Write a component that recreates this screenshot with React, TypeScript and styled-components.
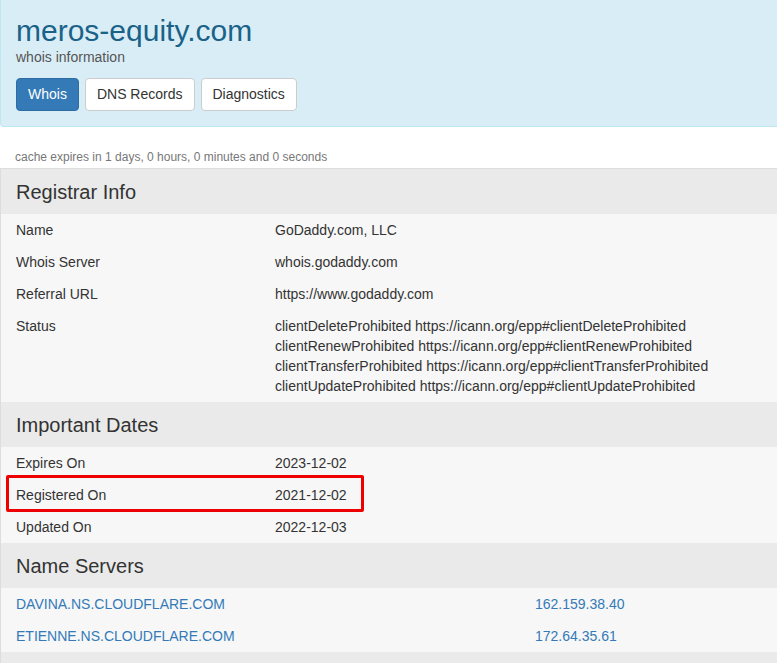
import React from "react";
import styled, { createGlobalStyle } from "styled-components";

const Global = createGlobalStyle`
  html, body { margin: 0; padding: 0; background: #fff; }
  body {
    font-family: "Liberation Sans", Arial, Helvetica, sans-serif;
    font-size: 14px;
    line-height: 20px;
    color: #333;
    overflow: hidden;
  }
  * { box-sizing: border-box; }
`;

const Page = styled.div`
  width: 100%;
`;

const Header = styled.header`
  background: #d9edf7;
  border: 1px solid #bce8f1;
  border-top: none;
  border-right: none;
  border-bottom-left-radius: 4px;
  padding: 14px 15px 15px 15px;
  height: 127px;
`;

const Title = styled.h1`
  margin: 0;
  font-size: 30px;
  line-height: 34px;
  font-weight: 400;
  color: #1a6287;
`;

const Subtitle = styled.div`
  font-size: 14px;
  line-height: 18px;
  color: #555;
`;

const Tabs = styled.nav`
  display: flex;
  gap: 6px;
  margin-top: 12px;
`;

const TabButton = styled.button<{ $active?: boolean }>`
  font-family: inherit;
  font-size: 14px;
  line-height: 19px;
  padding: 6px 11px;
  border-radius: 4px;
  cursor: pointer;
  border: 1px solid ${(p) => (p.$active ? "#2e6da4" : "#ccc")};
  background: ${(p) => (p.$active ? "#337ab7" : "#fff")};
  color: ${(p) => (p.$active ? "#fff" : "#333")};
`;

const Cache = styled.div`
  font-size: 12px;
  line-height: 16px;
  color: #777;
  padding: 22px 15px 3px 15px;
`;

const Table = styled.div`
  position: relative;
  border-top: 1px solid #ddd;
  border-left: 1px solid #ddd;
`;

const SectionHead = styled.div`
  background: #e9eae9;
  font-size: 20px;
  line-height: 25px;
  min-height: 45px;
  padding: 11px 15px 9px 15px;
  color: #333;
`;

const Row = styled.div<{ $cols: string }>`
  display: grid;
  grid-template-columns: ${(p) => p.$cols};
  background: #f7f7f7;
`;

const Cell = styled.div`
  padding: 6px 15px;
  line-height: 20px;
  color: #333;
`;

const LinkCell = styled.a`
  display: block;
  padding: 6px 15px;
  line-height: 20px;
  color: #337ab7;
  text-decoration: none;
`;

const Highlight = styled.div`
  position: absolute;
  left: 5px;
  top: 306px;
  width: 358px;
  height: 37px;
  border: 3px solid #ee0000;
  border-radius: 2px;
  pointer-events: none;
`;

const LABEL = "259px 1fr";
const NS = "519px 1fr";

const registrar: [string, string[]][] = [
  ["Name", ["GoDaddy.com, LLC"]],
  ["Whois Server", ["whois.godaddy.com"]],
  ["Referral URL", ["https://www.godaddy.com"]],
  [
    "Status",
    [
      "clientDeleteProhibited https://icann.org/epp#clientDeleteProhibited",
      "clientRenewProhibited https://icann.org/epp#clientRenewProhibited",
      "clientTransferProhibited https://icann.org/epp#clientTransferProhibited",
      "clientUpdateProhibited https://icann.org/epp#clientUpdateProhibited",
    ],
  ],
];

const dates: [string, string][] = [
  ["Expires On", "2023-12-02"],
  ["Registered On", "2021-12-02"],
  ["Updated On", "2022-12-03"],
];

const servers: [string, string][] = [
  ["DAVINA.NS.CLOUDFLARE.COM", "162.159.38.40"],
  ["ETIENNE.NS.CLOUDFLARE.COM", "172.64.35.61"],
];

export default function App() {
  return (
    <Page>
      <Global />
      <Header>
        <Title>meros-equity.com</Title>
        <Subtitle>whois information</Subtitle>
        <Tabs>
          <TabButton $active>Whois</TabButton>
          <TabButton>DNS Records</TabButton>
          <TabButton>Diagnostics</TabButton>
        </Tabs>
      </Header>
      <Cache>cache expires in 1 days, 0 hours, 0 minutes and 0 seconds</Cache>
      <Table>
        <SectionHead>Registrar Info</SectionHead>
        {registrar.map(([k, v]) => (
          <Row $cols={LABEL} key={k}>
            <Cell>{k}</Cell>
            <Cell>
              {v.map((line) => (
                <div key={line}>{line}</div>
              ))}
            </Cell>
          </Row>
        ))}
        <SectionHead>Important Dates</SectionHead>
        {dates.map(([k, v]) => (
          <Row $cols={LABEL} key={k}>
            <Cell>{k}</Cell>
            <Cell>{v}</Cell>
          </Row>
        ))}
        <SectionHead>Name Servers</SectionHead>
        {servers.map(([k, v]) => (
          <Row $cols={NS} key={k}>
            <LinkCell href="#">{k}</LinkCell>
            <LinkCell href="#">{v}</LinkCell>
          </Row>
        ))}
        <SectionHead />
        <Highlight />
      </Table>
    </Page>
  );
}
